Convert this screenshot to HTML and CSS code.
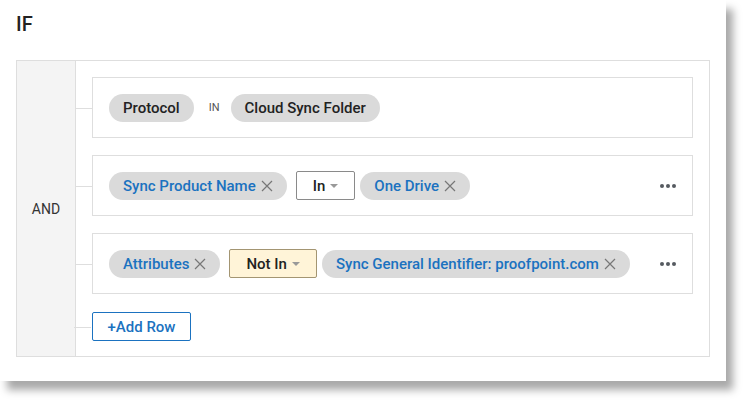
FILE: index.html
```html
<!DOCTYPE html>
<html>
<head>
<meta charset="utf-8">
<link rel="stylesheet" href="styles.css">
</head>
<body>
<div class="card">
  <div class="title">IF</div>
  <div class="group">
    <div class="op-col">AND</div>
    <div class="rows">
      <div class="row">
        <span class="chip">Protocol</span>
        <span class="in-label">IN</span>
        <span class="chip">Cloud Sync Folder</span>
      </div>
      <div class="row">
        <span class="chip blue">Sync Product Name<svg class="x" viewBox="0 0 12 12"><path d="M1 1L11 11M11 1L1 11"/></svg></span>
        <span class="dd">In<span class="caret"></span></span>
        <span class="chip blue">One Drive<svg class="x" viewBox="0 0 12 12"><path d="M1 1L11 11M11 1L1 11"/></svg></span>
        <span class="more"><i></i><i></i><i></i></span>
      </div>
      <div class="row">
        <span class="chip blue">Attributes<svg class="x" viewBox="0 0 12 12"><path d="M1 1L11 11M11 1L1 11"/></svg></span>
        <span class="dd yellow">Not In<span class="caret"></span></span>
        <span class="chip blue">Sync General Identifier: proofpoint.com<svg class="x" viewBox="0 0 12 12"><path d="M1 1L11 11M11 1L1 11"/></svg></span>
        <span class="more"><i></i><i></i><i></i></span>
      </div>
      <div class="add-wrap">
        <button class="add">+Add Row</button>
      </div>
    </div>
  </div>
</div>
</body>
</html>
```
FILE: styles.css
```css
* { box-sizing: border-box; }
html, body { margin: 0; padding: 0; background: #fff; }
body {
  font-family: Roboto, "Liberation Sans", Arial, sans-serif;
  color: #222;
  width: 745px;
  height: 400px;
  overflow: hidden;
}

.card {
  width: 726px;
  height: 381px;
  background: #fff;
  box-shadow: 7px 9px 8px rgba(0,0,0,0.34);
  padding: 11px 16px 0 16px;
}
.title {
  font-size: 20px;
  font-weight: 500;
  line-height: 26px;
  color: #222;
  height: 49px;
}
.group {
  display: flex;
  width: 694px;
  height: 297px;
  border: 1px solid #dedede;
}
.op-col {
  width: 59px;
  flex: none;
  background: #f4f4f4;
  border-right: 1px solid #dedede;
  display: flex;
  align-items: center;
  justify-content: center;
  font-size: 14px;
  color: #333;
  padding-top: 1px;
}
.rows {
  flex: 1;
  padding: 16px 16px 0 16px;
  display: flex;
  flex-direction: column;
  gap: 17px;
}
.row {
  position: relative;
  height: 61px;
  border: 1px solid #dedede;
  display: flex;
  align-items: center;
  padding: 0 16px;
}
.row::before, .add-wrap::before {
  content: "";
  position: absolute;
  left: -18px;
  top: 50%;
  width: 17px;
  height: 1px;
  background: #dedede;
}
.chip {
  display: inline-flex;
  align-items: center;
  height: 28px;
  padding: 0 14px;
  border-radius: 14px;
  background: #dadada;
  font-size: 15px;
  font-weight: 500;
  color: #222;
  white-space: nowrap;
}
.chip.blue { color: #1b72c0; }
.x {
  width: 12px;
  height: 12px;
  margin-left: 5px;
  stroke: #777;
  stroke-width: 1.2;
  fill: none;
}
.in-label {
  font-size: 11px;
  color: #555;
  margin: 0 11px 0 15px;
}
.dd {
  display: inline-flex;
  align-items: center;
  height: 29px;
  padding: 0 16px;
  border: 1px solid #8a8a8a;
  border-radius: 2px;
  background: #fff;
  font-size: 15px;
  font-weight: 500;
  color: #222;
  margin: 0 5px 0 9px;
}
.dd.yellow {
  background: #fff4d8;
  border-color: #a39572;
}
.caret {
  width: 0;
  height: 0;
  border-left: 4px solid transparent;
  border-right: 4px solid transparent;
  border-top: 4px solid #999;
  margin-left: 5px;
  margin-top: 1px;
}
.more {
  margin-left: auto;
  display: flex;
  gap: 2px;
}
.more i {
  width: 4px;
  height: 4px;
  border-radius: 50%;
  background: #555a60;
}
.add-wrap {
  position: relative;
  margin-top: 1px;
}
.add {
  height: 29px;
  width: 99px;
  border: 1px solid #1b72c0;
  border-radius: 2px;
  background: #fff;
  color: #1b72c0;
  font-family: Roboto, "Liberation Sans", Arial, sans-serif;
  font-size: 15px;
  font-weight: 500;
  padding: 0;
  display: block;
}
```
